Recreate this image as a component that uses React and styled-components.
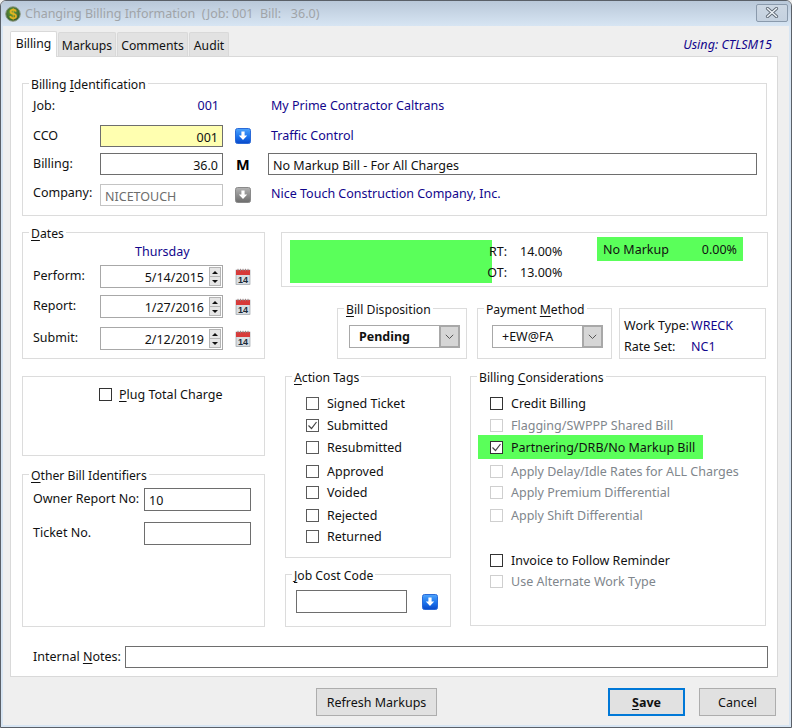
import React from 'react';
import styled, { createGlobalStyle } from 'styled-components';

const NAVY = '#12068c';
const GREEN = '#5aff5a';

const GlobalStyle = createGlobalStyle`
  html, body {
    margin: 0;
    padding: 0;
    background: #efefef;
  }
  body {
    font-family: "Noto Sans", "Open Sans", sans-serif;
    font-size: 12.5px;
    color: #111;
  }
`;

const AppLogo = () => (
  <svg width="16" height="16" viewBox="0 0 16 16">
    <defs>
      <radialGradient id="logoFill" cx="45%" cy="40%" r="65%">
        <stop offset="0%" stopColor="#6f9f3e" />
        <stop offset="100%" stopColor="#2a5526" />
      </radialGradient>
    </defs>
    <circle cx="8" cy="8" r="7.3" fill="url(#logoFill)" stroke="#8f9a88" strokeWidth="1" />
    <text x="8" y="12.8" textAnchor="middle" fontSize="14" fontWeight="700" fill="#e2b41e" fontFamily="Liberation Sans, sans-serif">$</text>
  </svg>
);

const ArrowIcon = ({ gray }) => {
  const id = gray ? 'arrowGray' : 'arrowBlue';
  return (
    <svg width="16" height="16" viewBox="0 0 16 16">
      <defs>
        <linearGradient id={id} x1="0" y1="0" x2="0" y2="1">
          <stop offset="0%" stopColor={gray ? '#b4b4b4' : '#4fa4fb'} />
          <stop offset="55%" stopColor={gray ? '#8c8c8c' : '#1b74ee'} />
          <stop offset="100%" stopColor={gray ? '#6c6c6c' : '#0a48c8'} />
        </linearGradient>
      </defs>
      <rect x="0.5" y="0.5" width="15" height="15" rx="2" fill={`url(#${id})`} stroke={gray ? '#8a8a8a' : '#2a6ad8'} />
      <path d="M6.4 3.5h3.2v4h2.6L8 12 3.8 7.5h2.6z" fill="#fff" />
    </svg>
  );
};

const CalendarIcon = () => (
  <svg width="16" height="17" viewBox="0 0 16 17">
    <rect x="1" y="2" width="14" height="14.5" fill="#d8dde2" stroke="#8d949b" strokeWidth="0.6" />
    <rect x="1" y="2" width="14" height="5" fill="#d83a3a" />
    <path d="M3 .8v2.4M5.5 .8v2.4M8 .8v2.4M10.5 .8v2.4M13 .8v2.4" stroke="#9a7a7a" strokeWidth="0.9" />
    <text x="8" y="15" textAnchor="middle" fontSize="9" fontWeight="700" fill="#1d2b3a" fontFamily="Liberation Sans, sans-serif">14</text>
  </svg>
);

const CheckMark = () => (
  <svg width="11" height="11" viewBox="0 0 11 11">
    <path d="M1.5 5.5l3 3 5-6.5" fill="none" stroke="currentColor" strokeWidth="1.2" />
  </svg>
);

const Chevron = () => (
  <svg width="9" height="6" viewBox="0 0 9 6">
    <path d="M.8 .8l3.7 3.7L8.2 .8" fill="none" stroke="#555" strokeWidth="1" />
  </svg>
);

const Window = styled.div`
  width: 792px;
  height: 728px;
  box-sizing: border-box;
  border: 1px solid #5a6068;
  border-radius: 6px 6px 0 0;
  background: #efefef;
  display: flex;
  flex-direction: column;
  overflow: hidden;
`;

const TitleBar = styled.header`
  height: 25px;
  flex: none;
  display: flex;
  align-items: center;
  gap: 4px;
  padding: 0 3px 0 4px;
  background: linear-gradient(#b9c8d9, #d7e5f3);
`;

const TitleText = styled.div`
  flex: 1;
  color: #a0a4a8;
  font-size: 12.5px;
  white-space: pre;
`;

const CloseButton = styled.button`
  width: 32px;
  height: 18px;
  padding: 0;
  margin-bottom: 2px;
  border: 1px solid #8a9aac;
  border-radius: 2px;
  background: linear-gradient(#ccd7e3, #c4d1df);
  display: flex;
  align-items: center;
  justify-content: center;
`;

const ClientArea = styled.div`
  flex: 1;
  display: flex;
  flex-direction: column;
  border: 2px solid #d7e5f3;
  border-top: none;
`;

const TabBar = styled.div`
  height: 30px;
  flex: none;
  display: flex;
  align-items: flex-end;
  padding: 0 17px 0 7px;
`;

const Tab = styled.div`
  box-sizing: border-box;
  height: ${p => (p.$active ? 26 : 24)}px;
  margin-bottom: ${p => (p.$active ? -1 : 0)}px;
  margin-right: 1px;
  width: ${p => p.$w}px;
  text-align: center;
  font-size: 12.2px;
  line-height: ${p => (p.$active ? 23 : 26)}px;
  background: ${p => (p.$active ? '#fff' : '#e2e2e2')};
  border: 1px solid #d9d9d9;
  border-bottom: none;
  border-radius: 2px 2px 0 0;
  position: relative;
  z-index: ${p => (p.$active ? 2 : 0)};
`;

const UsingLabel = styled.div`
  margin-left: auto;
  align-self: flex-end;
  margin-bottom: 3px;
  font-style: italic;
  font-size: 12.6px;
  color: ${NAVY};
`;

const Panel = styled.main`
  box-sizing: border-box;
  width: 768px;
  height: 621px;
  margin-left: 7px;
  flex: none;
  padding: 26px 10px 0 11px;
  background: #fff;
  border: 1px solid #d9d9d9;
  display: flex;
  flex-direction: column;
`;

const Group = styled.section`
  position: relative;
  box-sizing: border-box;
  flex: none;
  width: ${p => (p.$w ? `${p.$w}px` : 'auto')};
  height: ${p => p.$h}px;
  margin-top: ${p => p.$mt || 0}px;
  margin-left: ${p => p.$ml || 0}px;
  border: 1px solid #dcdcdc;
`;

const Legend = styled.div`
  position: absolute;
  top: -7px;
  left: 6px;
  padding: 0 2px;
  font-size: 12.2px;
  line-height: 16px;
  background: #fff;
  white-space: nowrap;
`;

const Hot = styled.u`
  text-underline-offset: 2px;
`;

const IdRow = styled.div`
  display: grid;
  grid-template-columns: 67px 123px 48px 1fr;
  align-items: start;
  margin-top: ${p => p.$top}px;
  padding: 0 9px 0 10px;
`;

const Label = styled.div`
  line-height: ${p => p.$lh || 22}px;
  white-space: nowrap;
`;

const LinkText = styled.div`
  line-height: ${p => p.$lh || 22}px;
  color: ${NAVY};
  white-space: nowrap;
  text-align: ${p => p.$align || 'left'};
  padding-right: ${p => p.$pad || 0}px;
`;

const IconCell = styled.div`
  height: 22px;
  display: flex;
  align-items: center;
  padding-left: 12px;
`;

const MarkLetter = styled.div`
  line-height: 22px;
  font-weight: 700;
  font-size: 14.5px;
  padding-left: 13px;
  color: #000;
`;

const TextBox = styled.input`
  box-sizing: border-box;
  display: block;
  width: ${p => (p.$w ? `${p.$w}px` : '100%')};
  height: ${p => p.$h || 22}px;
  margin: 0;
  padding: 2px 4px 0 4px;
  border: 1px solid ${p => (p.disabled ? '#c4c4c4' : '#6e6e6e')};
  border-radius: 0;
  outline: none;
  background: ${p => p.$bg || '#fff'};
  font: inherit;
  color: ${p => (p.disabled ? '#6d6d6d' : '#111')};
  text-align: ${p => p.$align || 'left'};
`;

const DescCell = styled.div`
  margin-left: -3px;
`;

const Columns = styled.div`
  display: grid;
  grid-template-columns: 243px 1fr;
  column-gap: 16px;
  margin-top: 16px;
`;

const Stack = styled.div`
  display: flex;
  flex-direction: column;
`;

const DayName = styled.div`
  margin: 9px 0 3px 0;
  height: 20px;
  line-height: 20px;
  color: ${NAVY};
  padding-left: 112px;
`;

const DateRow = styled.div`
  display: grid;
  grid-template-columns: 67px 123px 1fr;
  align-items: start;
  padding-left: 10px;
  margin-top: ${p => p.$top}px;
`;

const DateBox = styled.div`
  box-sizing: border-box;
  height: 23px;
  display: flex;
  align-items: center;
  justify-content: flex-end;
  padding-right: 1px;
  border: 1px solid #a8a8a8;
`;

const DateValue = styled.span`
  margin-right: 5px;
  padding-top: 1px;
`;

const Spinner = styled.div`
  box-sizing: border-box;
  width: 12px;
  height: 19px;
  display: flex;
  flex-direction: column;
  border: 1px solid #b4b4b4;
  background: #e6e6e6;
`;

const SpinPart = styled.div`
  flex: 1;
  display: flex;
  align-items: center;
  justify-content: center;
  font-size: 0;
  &::before {
    content: '';
    border-left: 3px solid transparent;
    border-right: 3px solid transparent;
    ${p => (p.$down ? 'border-top: 3px solid #111;' : 'border-bottom: 3px solid #111;')}
  }
  & + & {
    border-top: 1px solid #b4b4b4;
  }
`;

const CalCell = styled.div`
  height: 23px;
  padding-left: 12px;
  display: flex;
  align-items: center;
`;

const PlugRow = styled.div`
  display: flex;
  align-items: center;
  gap: 7px;
  padding: 9px 0 0 76px;
`;

const Box = styled.span`
  box-sizing: border-box;
  flex: none;
  width: 13px;
  height: 13px;
  display: inline-flex;
  align-items: center;
  justify-content: center;
  background: #fff;
  border: 1px solid ${p => (p.$off ? '#cfcfcf' : p.$soft ? '#5a5a5a' : '#333')};
  color: #444;
`;

const OwnerRow = styled.div`
  display: grid;
  grid-template-columns: 111px 107px;
  align-items: start;
  padding-left: 10px;
  margin-top: ${p => p.$top}px;
`;

const RatesBody = styled.div`
  display: flex;
  align-items: flex-start;
  height: 100%;
  padding-left: 8px;
`;

const GreenBlock = styled.div`
  width: 202px;
  height: 43px;
  margin-top: 7px;
  flex: none;
  background: ${GREEN};
`;

const RatesGrid = styled.div`
  display: grid;
  grid-template-columns: 18px auto;
  column-gap: 13px;
  grid-auto-rows: 21px;
  margin: 8px 0 0 -3px;
  line-height: 21px;
`;

const RateKey = styled.span`
  justify-self: end;
  white-space: nowrap;
`;

const MarkupFlag = styled.div`
  box-sizing: border-box;
  width: 146px;
  height: 24px;
  margin: 4px 24px 0 auto;
  padding: 0 6px;
  display: flex;
  justify-content: space-between;
  align-items: center;
  background: ${GREEN};
`;

const SelectRow = styled.div`
  display: flex;
  margin: 21px 0 17px 56px;
`;

const Select = styled.div`
  box-sizing: border-box;
  width: 111px;
  height: 23px;
  margin: 16px 0 0 ${p => p.$ml}px;
  display: flex;
  align-items: stretch;
  border: 1px solid #a8a8a8;
  font-weight: ${p => (p.$bold ? 700 : 400)};
`;

const SelectValue = styled.div`
  flex: 1;
  line-height: 21px;
  padding-left: 9px;
  white-space: nowrap;
`;

const SelectArrow = styled.div`
  box-sizing: border-box;
  width: 21px;
  margin: -1px -1px -1px 0;
  display: flex;
  align-items: center;
  justify-content: center;
  background: #d6d6d6;
  border: 2px solid #a8a8a8;
`;

const InfoGrid = styled.div`
  display: grid;
  grid-template-columns: 67px auto;
  grid-auto-rows: 21px;
  padding: 6px 0 0 4px;
  line-height: 21px;
`;

const InfoValue = styled.span`
  color: ${NAVY};
`;

const LowerGrid = styled.div`
  display: grid;
  grid-template-columns: 166px 296px;
  column-gap: 19px;
  margin-left: 4px;
`;

const CheckList = styled.div`
  display: flex;
  flex-direction: column;
  padding: 18px 0 0 ${p => p.$left}px;
`;

const CheckRow = styled.label`
  display: flex;
  align-items: center;
  gap: 8px;
  height: 16px;
  margin-top: ${p => p.$top || 0}px;
  white-space: nowrap;
  color: ${p => (p.$off ? '#80868c' : '#111')};
  ${p => p.$lit && `
    background: ${GREEN};
    width: 213px;
    height: 24px;
    padding-left: 12px;
    margin-left: -12px;
    margin-bottom: -4px;
    margin-top: ${(p.$top || 0) - 4}px;
  `}
`;

const JobCostRow = styled.div`
  display: flex;
  align-items: center;
  gap: 15px;
  padding: 15px 0 0 10px;
`;

const NotesRow = styled.div`
  display: flex;
  align-items: center;
  gap: 4px;
  margin: 19px -1px 0 0;
  padding-left: 11px;
`;

const Footer = styled.footer`
  flex: 1;
  display: flex;
  align-items: flex-start;
  padding: 11px 0 0 313px;
`;

const Button = styled.button`
  box-sizing: border-box;
  width: ${p => p.$w}px;
  height: 28px;
  margin-left: ${p => p.$left || 0}px;
  padding: 0;
  background: #e1e1e1;
  border: ${p => (p.$primary ? '2px solid #0078d7' : '1px solid #adadad')};
  font: inherit;
  font-weight: ${p => (p.$primary ? 700 : 400)};
  color: #111;
`;

const actionTags = [
  { label: 'Signed Ticket', top: 0 },
  { label: 'Submitted', top: 6, checked: true },
  { label: 'Resubmitted', top: 6 },
  { label: 'Approved', top: 8 },
  { label: 'Voided', top: 5 },
  { label: 'Rejected', top: 7 },
  { label: 'Returned', top: 5 },
];

const considerations = [
  { label: 'Credit Billing', top: 0 },
  { label: 'Flagging/SWPPP Shared Bill', top: 6, off: true },
  { label: 'Partnering/DRB/No Markup Bill', top: 6, checked: true, lit: true },
  { label: 'Apply Delay/Idle Rates for ALL Charges', top: 8, off: true },
  { label: 'Apply Premium Differential', top: 5, off: true },
  { label: 'Apply Shift Differential', top: 7, off: true },
  { label: 'Invoice to Follow Reminder', top: 29 },
  { label: 'Use Alternate Work Type', top: 5, off: true },
];

const dates = [
  { label: 'Perform:', value: '5/14/2015', top: 0 },
  { label: 'Report:', value: '1/27/2016', top: 7 },
  { label: 'Submit:', value: '2/12/2019', top: 9 },
];

const tabs = [
  { label: 'Billing', w: 47, active: true },
  { label: 'Markups', w: 58 },
  { label: 'Comments', w: 71 },
  { label: 'Audit', w: 40 },
];

const App = () => (
  <>
    <GlobalStyle />
    <Window>
      <TitleBar>
        <AppLogo />
        <TitleText>Changing Billing Information  (Job: 001  Bill:   36.0)</TitleText>
        <CloseButton>
          <svg width="14" height="11" viewBox="0 0 14 11">
            <path d="M2.5 1.5l9 8M11.5 1.5l-9 8" stroke="#5f6974" strokeWidth="3.2" strokeLinecap="round" />
            <path d="M2.5 1.5l9 8M11.5 1.5l-9 8" stroke="#eef3f8" strokeWidth="1.5" strokeLinecap="round" />
          </svg>
        </CloseButton>
      </TitleBar>

      <ClientArea>
        <TabBar>
          {tabs.map(t => (
            <Tab key={t.label} $w={t.w} $active={t.active}>{t.label}</Tab>
          ))}
          <UsingLabel>Using: CTLSM15</UsingLabel>
        </TabBar>

        <Panel>
          <Group $h={133}>
            <Legend>Billing <Hot>I</Hot>dentification</Legend>
            <IdRow $top={11}>
              <Label>Job:</Label>
              <LinkText $align="right" $pad={4}>001</LinkText>
              <span />
              <LinkText>My Prime Contractor Caltrans</LinkText>
            </IdRow>
            <IdRow $top={8}>
              <Label>CCO</Label>
              <TextBox readOnly value="001" $align="right" $bg="#ffffb0" />
              <IconCell><ArrowIcon /></IconCell>
              <LinkText>Traffic Control</LinkText>
            </IdRow>
            <IdRow $top={6}>
              <Label>Billing:</Label>
              <TextBox readOnly value="36.0" $align="right" />
              <MarkLetter>M</MarkLetter>
              <DescCell>
                <TextBox readOnly value="No Markup Bill - For All Charges" />
              </DescCell>
            </IdRow>
            <IdRow $top={9}>
              <Label $lh={18}>Company:</Label>
              <TextBox disabled value="NICETOUCH" />
              <IconCell><ArrowIcon gray /></IconCell>
              <LinkText $lh={20}>Nice Touch Construction Company, Inc.</LinkText>
            </IdRow>
          </Group>

          <Columns>
            <Stack>
              <Group $h={127}>
                <Legend><Hot>D</Hot>ates</Legend>
                <DayName>Thursday</DayName>
                {dates.map(d => (
                  <DateRow key={d.label} $top={d.top}>
                    <Label>{d.label}</Label>
                    <DateBox>
                      <DateValue>{d.value}</DateValue>
                      <Spinner><SpinPart /><SpinPart $down /></Spinner>
                    </DateBox>
                    <CalCell><CalendarIcon /></CalCell>
                  </DateRow>
                ))}
              </Group>
              <Group $h={80} $mt={17}>
                <PlugRow>
                  <Box />
                  <span><Hot>P</Hot>lug Total Charge</span>
                </PlugRow>
              </Group>
              <Group $h={153} $mt={18}>
                <Legend><Hot>O</Hot>ther Bill Identifiers</Legend>
                <OwnerRow $top={13}>
                  <Label>Owner Report No:</Label>
                  <TextBox readOnly value="10" $h={23} />
                </OwnerRow>
                <OwnerRow $top={11}>
                  <Label>Ticket No.</Label>
                  <TextBox readOnly value="" $h={23} />
                </OwnerRow>
              </Group>
            </Stack>

            <div>
              <Group $w={487} $h={55}>
                <RatesBody>
                  <GreenBlock />
                  <RatesGrid>
                    <RateKey>RT:</RateKey><span>14.00%</span>
                    <RateKey>OT:</RateKey><span>13.00%</span>
                  </RatesGrid>
                  <MarkupFlag>
                    <span>No Markup</span>
                    <span>0.00%</span>
                  </MarkupFlag>
                </RatesBody>
              </Group>

              <SelectRow>
                <Group $w={130} $h={51}>
                  <Legend><Hot>B</Hot>ill Disposition</Legend>
                  <Select $ml={11} $bold>
                    <SelectValue>Pending</SelectValue>
                    <SelectArrow><Chevron /></SelectArrow>
                  </Select>
                </Group>
                <Group $w={135} $h={51} $ml={10}>
                  <Legend>Payment <Hot>M</Hot>ethod</Legend>
                  <Select $ml={14}>
                    <SelectValue>+EW@FA</SelectValue>
                    <SelectArrow><Chevron /></SelectArrow>
                  </Select>
                </Group>
                <Group $w={147} $h={51} $ml={7}>
                  <InfoGrid>
                    <span>Work Type:</span><InfoValue>WRECK</InfoValue>
                    <span>Rate Set:</span><InfoValue>NC1</InfoValue>
                  </InfoGrid>
                </Group>
              </SelectRow>

              <LowerGrid>
                <Stack>
                  <Group $h={182}>
                    <Legend><Hot>A</Hot>ction Tags</Legend>
                    <CheckList $left={20}>
                      {actionTags.map(t => (
                        <CheckRow key={t.label} $top={t.top}>
                          <Box $soft>{t.checked && <CheckMark />}</Box>
                          {t.label}
                        </CheckRow>
                      ))}
                    </CheckList>
                  </Group>
                  <Group $h={53} $mt={16}>
                    <Legend><Hot>J</Hot>ob Cost Code</Legend>
                    <JobCostRow>
                      <TextBox readOnly value="" $w={111} $h={23} />
                      <ArrowIcon />
                    </JobCostRow>
                  </Group>
                </Stack>
                <Group $h={250}>
                  <Legend>Billing <Hot>C</Hot>onsiderations</Legend>
                  <CheckList $left={19}>
                    {considerations.map(c => (
                      <CheckRow key={c.label} $top={c.top} $off={c.off} $lit={c.lit}>
                        <Box $off={c.off}>{c.checked && <CheckMark />}</Box>
                        {c.label}
                      </CheckRow>
                    ))}
                  </CheckList>
                </Group>
              </LowerGrid>
            </div>
          </Columns>

          <NotesRow>
            <Label>Internal <Hot>N</Hot>otes:</Label>
            <TextBox readOnly value="" />
          </NotesRow>
        </Panel>

        <Footer>
          <Button $w={121}>Refresh Markups</Button>
          <Button $w={77} $left={171} $primary><Hot>S</Hot>ave</Button>
          <Button $w={77} $left={14}>Cancel</Button>
        </Footer>
      </ClientArea>
    </Window>
  </>
);

export default App;
